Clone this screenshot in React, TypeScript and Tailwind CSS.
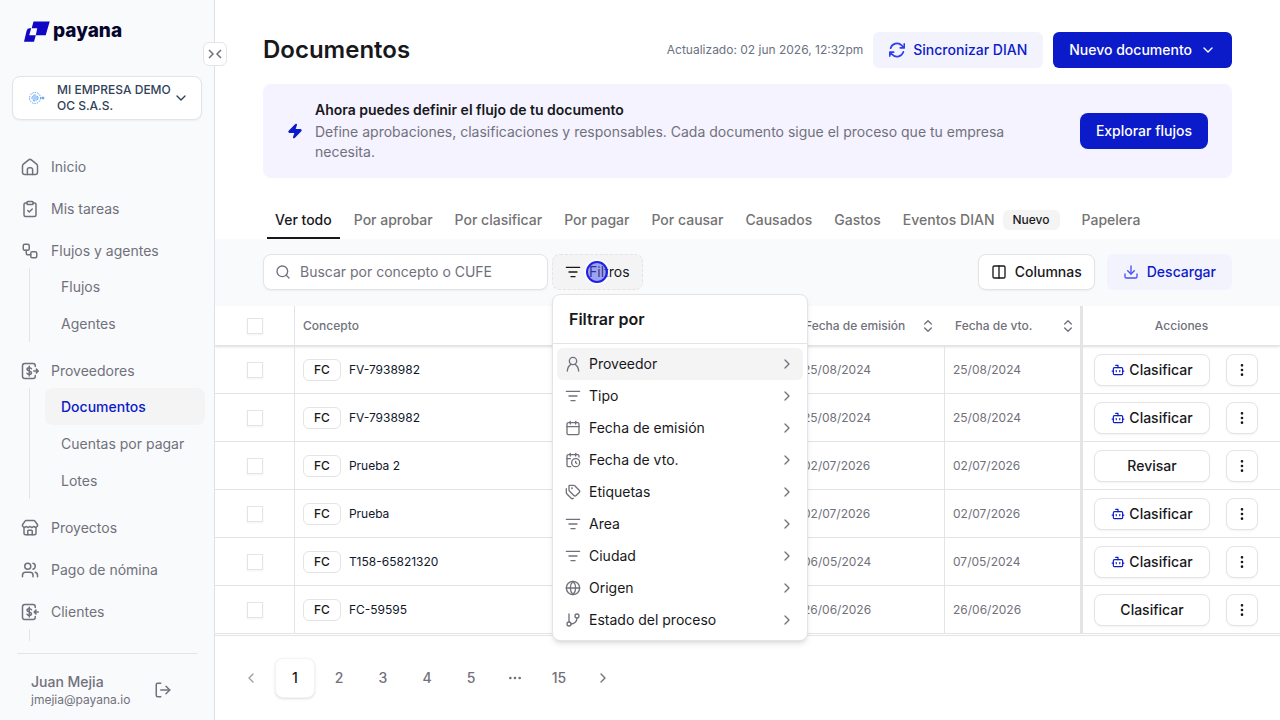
import type { ReactNode } from 'react';
import {
  Bot,
  Calendar,
  CalendarClock,
  ChevronDown,
  ChevronLeft,
  ChevronRight,
  ChevronsUpDown,
  ClipboardCheck,
  Columns2,
  Download,
  Ellipsis,
  EllipsisVertical,
  GitBranch,
  Globe,
  ListFilter,
  LogOut,
  Search,
  Store,
  Tags,
  Users,
  Workflow,
  Zap,
} from 'lucide-react';

interface NavItem {
  label: string;
  icon: ReactNode;
  children?: string[];
}

interface DocumentRow {
  concept: string;
  issued: string;
  due: string;
  action: string;
  bot: boolean;
}

interface IconProps {
  size?: number;
  strokeWidth?: number;
  className?: string;
}

function HomeIcon() {
  return (
    <svg
      width="18"
      height="18"
      viewBox="0 0 24 24"
      fill="none"
      stroke="currentColor"
      strokeWidth="2"
      strokeLinecap="round"
      strokeLinejoin="round"
    >
      <path d="M2 10.500c0-1 .400-1.700 1.200-2.300l7-5.700a3 3 0 0 1 3.600 0l7 5.700c.8.600 1.200 1.300 1.200 2.300V19a3 3 0 0 1-3 3H5a3 3 0 0 1-3-3z" />
      <path d="M8.500 22v-6.500a2.500 2.500 0 0 1 2.500-2.500h2a2.500 2.500 0 0 1 2.500 2.500V22" />
    </svg>
  );
}

function SyncIcon() {
  return (
    <svg
      width="16"
      height="16"
      viewBox="2 2 20 20"
      fill="none"
      stroke="#2f3df0"
      strokeWidth="2"
      strokeLinecap="round"
      strokeLinejoin="round"
    >
      <path d="M16.023 9.348h4.992M2.985 19.644v-4.992h4.992M2.984 14.652l3.181 3.183a8.250 8.250 0 0 0 13.803-3.700M4.031 9.865a8.250 8.250 0 0 1 13.803-3.700l3.181 3.182V4.356" />
    </svg>
  );
}

function PersonIcon({ size = 16, strokeWidth = 2, className }: IconProps) {
  return (
    <svg
      width={size}
      height={size}
      viewBox="0 0 24 24"
      fill="none"
      stroke="currentColor"
      strokeWidth={strokeWidth}
      strokeLinecap="round"
      strokeLinejoin="round"
      className={className}
    >
      <circle cx="12" cy="7.500" r="5.500" />
      <path d="M3.500 22.500c.3-4.500 2-8 5.500-10M20.500 22.500c-.3-4.500-2-8-5.500-10" />
    </svg>
  );
}

function MoneyIcon({ incoming = false }: { incoming?: boolean }) {
  return (
    <svg
      width="18"
      height="18"
      viewBox="0 0 24 24"
      fill="none"
      stroke="currentColor"
      strokeWidth="2"
      strokeLinecap="round"
      strokeLinejoin="round"
    >
      <path d="M19 6V5a3 3 0 0 0-3-3H5a3 3 0 0 0-3 3v14a3 3 0 0 0 3 3h11a3 3 0 0 0 3-3v-1" />
      <path d="M14 9c-.5-1-1.400-1.500-3-1.500-1.700 0-3 .800-3 2.200 0 3.200 6 1.400 6 4.600 0 1.400-1.300 2.200-3 2.200-1.600 0-2.500-.500-3-1.500M11 5.500v13" />
      {incoming ? (
        <path d="M23 12h-5M20 9.500 17.500 12l2.500 2.500" />
      ) : (
        <path d="M17 12h6M20.500 9.500 23 12l-2.500 2.500" />
      )}
    </svg>
  );
}

function Logo() {
  return (
    <a href="#" className="flex items-center gap-[3px]">
      <svg width="26" height="22" viewBox="0 0 26 22">
        <path
          fill="#1106c4"
          fillRule="evenodd"
          d="M9.500 1.500H25.700l-4 13.800H11.800L10 21.700H0L2.700 10.500Q3.400 8.300 5.600 8.300H7.700zM7.200 8.300h6L11.800 15.300H5.200z"
        />
      </svg>
      <span className="text-[19px] leading-5 font-extrabold text-[#06052e]">payana</span>
    </a>
  );
}

const navItems: NavItem[] = [
  { label: 'Inicio', icon: <HomeIcon /> },
  { label: 'Mis tareas', icon: <ClipboardCheck size={18} /> },
  { label: 'Flujos y agentes', icon: <Workflow size={18} />, children: ['Flujos', 'Agentes'] },
  {
    label: 'Proveedores',
    icon: <MoneyIcon />,
    children: ['Documentos', 'Cuentas por pagar', 'Lotes'],
  },
  { label: 'Proyectos', icon: <Store size={18} /> },
  { label: 'Pago de nómina', icon: <Users size={18} /> },
  { label: 'Clientes', icon: <MoneyIcon incoming />, children: [] },
];

const tabs = [
  'Ver todo',
  'Por aprobar',
  'Por clasificar',
  'Por pagar',
  'Por causar',
  'Causados',
  'Gastos',
  'Eventos DIAN',
  'Papelera',
];

const filters = [
  { label: 'Proveedor', Icon: PersonIcon },
  { label: 'Tipo', Icon: ListFilter },
  { label: 'Fecha de emisión', Icon: Calendar },
  { label: 'Fecha de vto.', Icon: CalendarClock },
  { label: 'Etiquetas', Icon: Tags },
  { label: 'Area', Icon: ListFilter },
  { label: 'Ciudad', Icon: ListFilter },
  { label: 'Origen', Icon: Globe },
  { label: 'Estado del proceso', Icon: GitBranch },
];

const rows: DocumentRow[] = [
  { concept: 'FV-7938982', issued: '25/08/2024', due: '25/08/2024', action: 'Clasificar', bot: true },
  { concept: 'FV-7938982', issued: '25/08/2024', due: '25/08/2024', action: 'Clasificar', bot: true },
  { concept: 'Prueba 2', issued: '02/07/2026', due: '02/07/2026', action: 'Revisar', bot: false },
  { concept: 'Prueba', issued: '02/07/2026', due: '02/07/2026', action: 'Clasificar', bot: true },
  { concept: 'T158-65821320', issued: '06/05/2024', due: '07/05/2024', action: 'Clasificar', bot: true },
  { concept: 'FC-59595', issued: '26/06/2026', due: '26/06/2026', action: 'Clasificar', bot: false },
];

function Sidebar() {
  return (
    <aside className="relative flex w-[215px] shrink-0 flex-col border-r border-[#dde2e8] bg-[#f9fafc] text-zinc-500">
      <div className="px-6 pt-5">
        <Logo />
      </div>
      <button
        aria-label="Contraer menú"
        className="absolute top-[42px] -right-[13px] z-10 flex size-6 items-center justify-center rounded-md border border-zinc-200 bg-white"
      >
        <svg width="14" height="10" viewBox="0 0 14 10" fill="none" stroke="#71717a" strokeWidth="1.500">
          <path d="M1 1l4 4-4 4M13 1L9 5l4 4" />
        </svg>
      </button>

      <button className="mx-3 mt-[34px] flex h-11 items-center rounded-lg border border-zinc-200 bg-white pl-4 text-left text-xs leading-4 font-medium text-slate-700 shadow-xs">
        <svg width="16" height="14" viewBox="0 0 16 14" fill="none" stroke="#5ba3f5">
          <circle cx="6" cy="7" r="5.500" strokeDasharray="1.500 1" />
          <circle cx="6" cy="7" r="3" strokeDasharray="3 1" />
          <path d="M5 5v4M7 5v4M11 7h4" />
          <circle cx="14" cy="7" r="1" />
        </svg>
        <span className="ml-3 w-[116px] whitespace-pre-line">{'MI EMPRESA DEMO\nOC S.A.S.'}</span>
        <ChevronDown size={16} />
      </button>

      <nav className="mt-[30px] min-h-0 flex-1 overflow-hidden text-sm">
        {navItems.map((item) => (
          <div key={item.label} className={item.children ? 'mb-3' : 'mb-2'}>
            <a href="#" className="flex h-[34px] items-center gap-3 pl-[21px]">
              {item.icon}
              {item.label}
            </a>
            {item.children && (
              <ul className="mr-[9px] ml-[29px] min-h-3 border-l border-zinc-200 pl-[15px]">
                {item.children.map((child) => (
                  <li key={child}>
                    <a
                      href="#"
                      className={
                        child === 'Documentos'
                          ? 'flex h-[37px] items-center rounded-lg bg-[#f4f4f4] px-4 font-medium text-[#0c1bc9]'
                          : 'flex h-[37px] items-center px-4'
                      }
                    >
                      {child}
                    </a>
                  </li>
                ))}
              </ul>
            )}
          </div>
        ))}
      </nav>

      <div className="mx-[17px] mt-3 flex h-[67px] items-center justify-between border-t border-zinc-200 pt-[5px] pr-[25px] pl-[14px]">
        <div>
          <div className="text-sm font-medium">Juan Mejia</div>
          <div className="text-xs">jmejia@payana.io</div>
        </div>
        <button aria-label="Cerrar sesión">
          <LogOut size={18} />
        </button>
      </div>
    </aside>
  );
}

function Header() {
  return (
    <header className="flex items-center gap-[10px] px-12 pt-8">
      <h1 className="mr-auto text-2xl font-semibold text-zinc-900">Documentos</h1>
      <span className="text-xs text-gray-500">Actualizado: 02 jun 2026, 12:32pm</span>
      <button className="flex h-9 items-center gap-2 rounded-md bg-[#f3f3fe] px-4 text-sm font-medium text-[#0c1bc9]">
        <SyncIcon />
        Sincronizar DIAN
      </button>
      <button className="flex h-9 items-center gap-2 rounded-md bg-[#0c1bc9] px-4 text-sm font-medium text-white">
        Nuevo documento
        <ChevronDown size={16} />
      </button>
    </header>
  );
}

function Banner() {
  return (
    <section className="mx-12 mt-4 flex items-center rounded-lg bg-[#f5f3ff] px-6 py-4 text-sm">
      <Zap size={16} fill="currentColor" className="shrink-0 text-[#0c1bc9]" />
      <div className="mx-3 flex-1 pr-3">
        <h2 className="font-semibold text-zinc-900">Ahora puedes definir el flujo de tu documento</h2>
        <p className="mt-0.5 text-zinc-500">
          Define aprobaciones, clasificaciones y responsables. Cada documento sigue el proceso que tu
          empresa necesita.
        </p>
      </div>
      <button className="h-9 rounded-lg bg-[#0c1bc9] px-4 font-medium text-white">Explorar flujos</button>
    </section>
  );
}

function FilterMenu() {
  return (
    <div className="absolute top-10 left-0 z-20 w-64 rounded-lg border border-zinc-200 bg-white shadow-md">
      <h3 className="border-b border-zinc-200 px-4 py-3 text-base font-semibold text-zinc-900">
        Filtrar por
      </h3>
      <ul className="p-1">
        {filters.map(({ label, Icon }, index) => (
          <li key={label}>
            <button
              className={
                index === 0
                  ? 'flex h-8 w-full items-center gap-2 rounded-md bg-zinc-100 px-2 text-sm text-zinc-900'
                  : 'flex h-8 w-full items-center gap-2 rounded-md px-2 text-sm text-zinc-900'
              }
            >
              <Icon size={16} strokeWidth={2} className="text-zinc-500" />
              {label}
              <ChevronRight size={16} className="ml-auto text-zinc-500" />
            </button>
          </li>
        ))}
      </ul>
    </div>
  );
}

function Toolbar() {
  return (
    <div className="flex items-center bg-[#f9fafc] pt-[15px] pr-12 pb-4 pl-12 text-sm">
      <label className="flex h-9 w-[285px] items-center gap-2 rounded-lg border border-zinc-200 bg-white px-[11px] shadow-xs">
        <Search size={16} className="text-zinc-500" />
        <input
          type="text"
          aria-label="Buscar"
          placeholder="Buscar por concepto o CUFE"
          className="min-w-0 flex-1 pl-px outline-none placeholder:text-zinc-500"
        />
      </label>
      <div className="relative ml-1">
        <button className="flex h-9 items-center gap-2 rounded-lg border border-dashed border-zinc-200 bg-zinc-100 px-3 text-zinc-900">
          <ListFilter size={16} />
          Filtros
        </button>
        <span className="absolute top-[7px] left-[34px] size-[22px] rounded-full border-2 border-[#1a22e8] bg-[#4a50f0]/50 ring-2 ring-white/60" />
        <FilterMenu />
      </div>
      <button className="ml-auto flex h-9 items-center gap-2 rounded-lg border border-zinc-200 bg-white px-3 font-medium text-zinc-900 shadow-xs">
        <Columns2 size={16} />
        Columnas
      </button>
      <button className="ml-3 flex h-9 items-center gap-2 rounded-md bg-[#f3f3fe] px-4 font-medium text-[#0c1bc9]">
        <Download size={16} className="text-[#4a50f0]" />
        Descargar
      </button>
    </div>
  );
}

function DocumentsTable() {
  return (
    <div className="min-h-0 flex-1 overflow-hidden border-b border-zinc-200">
      <table className="w-full table-fixed border-separate border-spacing-0 text-left text-xs text-zinc-500">
        <colgroup>
          <col className="w-20" />
          <col />
          <col className="w-[150px]" />
          <col className="w-[138px]" />
          <col className="w-[197px]" />
        </colgroup>
        <thead className="shadow-sm">
          <tr className="h-10">
            <th className="border-r border-b border-zinc-200 px-8">
              <input
                type="checkbox"
                aria-label="Seleccionar todo"
                className="block size-4 appearance-none border border-zinc-200 bg-white shadow-xs"
              />
            </th>
            <th className="border-b border-zinc-200 px-2 font-medium">Concepto</th>
            <th className="border-b border-zinc-200 pr-[9px] pl-[10px] font-medium">
              <button className="flex w-full items-center justify-between">
                Fecha de emisión
                <ChevronsUpDown size={16} />
              </button>
            </th>
            <th className="border-r-3 border-b border-r-zinc-200 border-b-zinc-200 pr-1 pl-[10px] font-medium">
              <button className="flex w-full items-center justify-between">
                Fecha de vto.
                <ChevronsUpDown size={16} />
              </button>
            </th>
            <th className="border-b border-zinc-200 text-center font-medium">Acciones</th>
          </tr>
        </thead>
        <tbody>
          {rows.map((row, index) => (
            <tr key={index} className="h-12">
              <td className="border-r border-b border-zinc-200 px-8">
                <input
                  type="checkbox"
                  aria-label={`Seleccionar ${row.concept}`}
                  className="block size-4 appearance-none border border-zinc-200 bg-white shadow-xs"
                />
              </td>
              <td className="border-b border-zinc-200 px-2">
                <div className="flex items-center gap-2 text-slate-900">
                  <span className="rounded-md border border-zinc-200 px-[10px] py-0.5 font-medium text-zinc-900">
                    FC
                  </span>
                  {row.concept}
                </div>
              </td>
              <td className="border-r border-b border-zinc-200 px-2">{row.issued}</td>
              <td className="border-r-3 border-b border-r-zinc-200 border-b-zinc-200 px-2">{row.due}</td>
              <td className="border-b border-zinc-200 pl-[11px]">
                <div className="flex items-center gap-4 text-zinc-900">
                  <button className="flex h-8 w-[116px] items-center justify-center gap-1 rounded-lg border border-zinc-200 bg-white text-sm font-medium shadow-xs">
                    {row.bot && <Bot size={14} className="text-[#0c1bc9]" />}
                    {row.action}
                  </button>
                  <button
                    aria-label="Más opciones"
                    className="flex size-8 items-center justify-center rounded-lg border border-zinc-200 bg-white shadow-xs"
                  >
                    <EllipsisVertical size={16} />
                  </button>
                </div>
              </td>
            </tr>
          ))}
        </tbody>
      </table>
    </div>
  );
}

function Pagination() {
  return (
    <nav className="flex gap-1 py-[22px] pl-4 text-sm font-medium text-zinc-500">
      <button aria-label="Anterior" className="flex size-10 items-center justify-center text-zinc-400">
        <ChevronLeft size={16} />
      </button>
      <button className="size-10 rounded-lg border border-zinc-100 bg-white text-zinc-900 shadow-sm">1</button>
      {[2, 3, 4, 5].map((page) => (
        <button key={page} className="size-10">
          {page}
        </button>
      ))}
      <span className="flex size-10 items-center justify-center">
        <Ellipsis size={16} />
      </span>
      <button className="size-10">15</button>
      <button aria-label="Siguiente" className="flex size-10 items-center justify-center">
        <ChevronRight size={16} />
      </button>
    </nav>
  );
}

export default function App() {
  return (
    <div className="flex h-screen bg-white font-['Inter',sans-serif]">
      <Sidebar />
      <main className="flex min-w-0 flex-1 flex-col">
        <Header />
        <Banner />
        <div className="mt-6 flex gap-[6px] px-[52px] text-sm font-medium text-neutral-500">
          {tabs.map((tab) => (
            <button
              key={tab}
              className={
                tab === 'Ver todo'
                  ? 'flex h-[37px] items-center border-b-2 border-zinc-900 px-2 text-zinc-900'
                  : 'flex h-[37px] items-center border-b-2 border-transparent px-2'
              }
            >
              {tab}
              {tab === 'Eventos DIAN' && (
                <span className="ml-2 rounded-md bg-zinc-100 px-[10px] py-0.5 text-xs text-zinc-900">
                  Nuevo
                </span>
              )}
            </button>
          ))}
        </div>
        <Toolbar />
        <DocumentsTable />
        <Pagination />
      </main>
    </div>
  );
}
